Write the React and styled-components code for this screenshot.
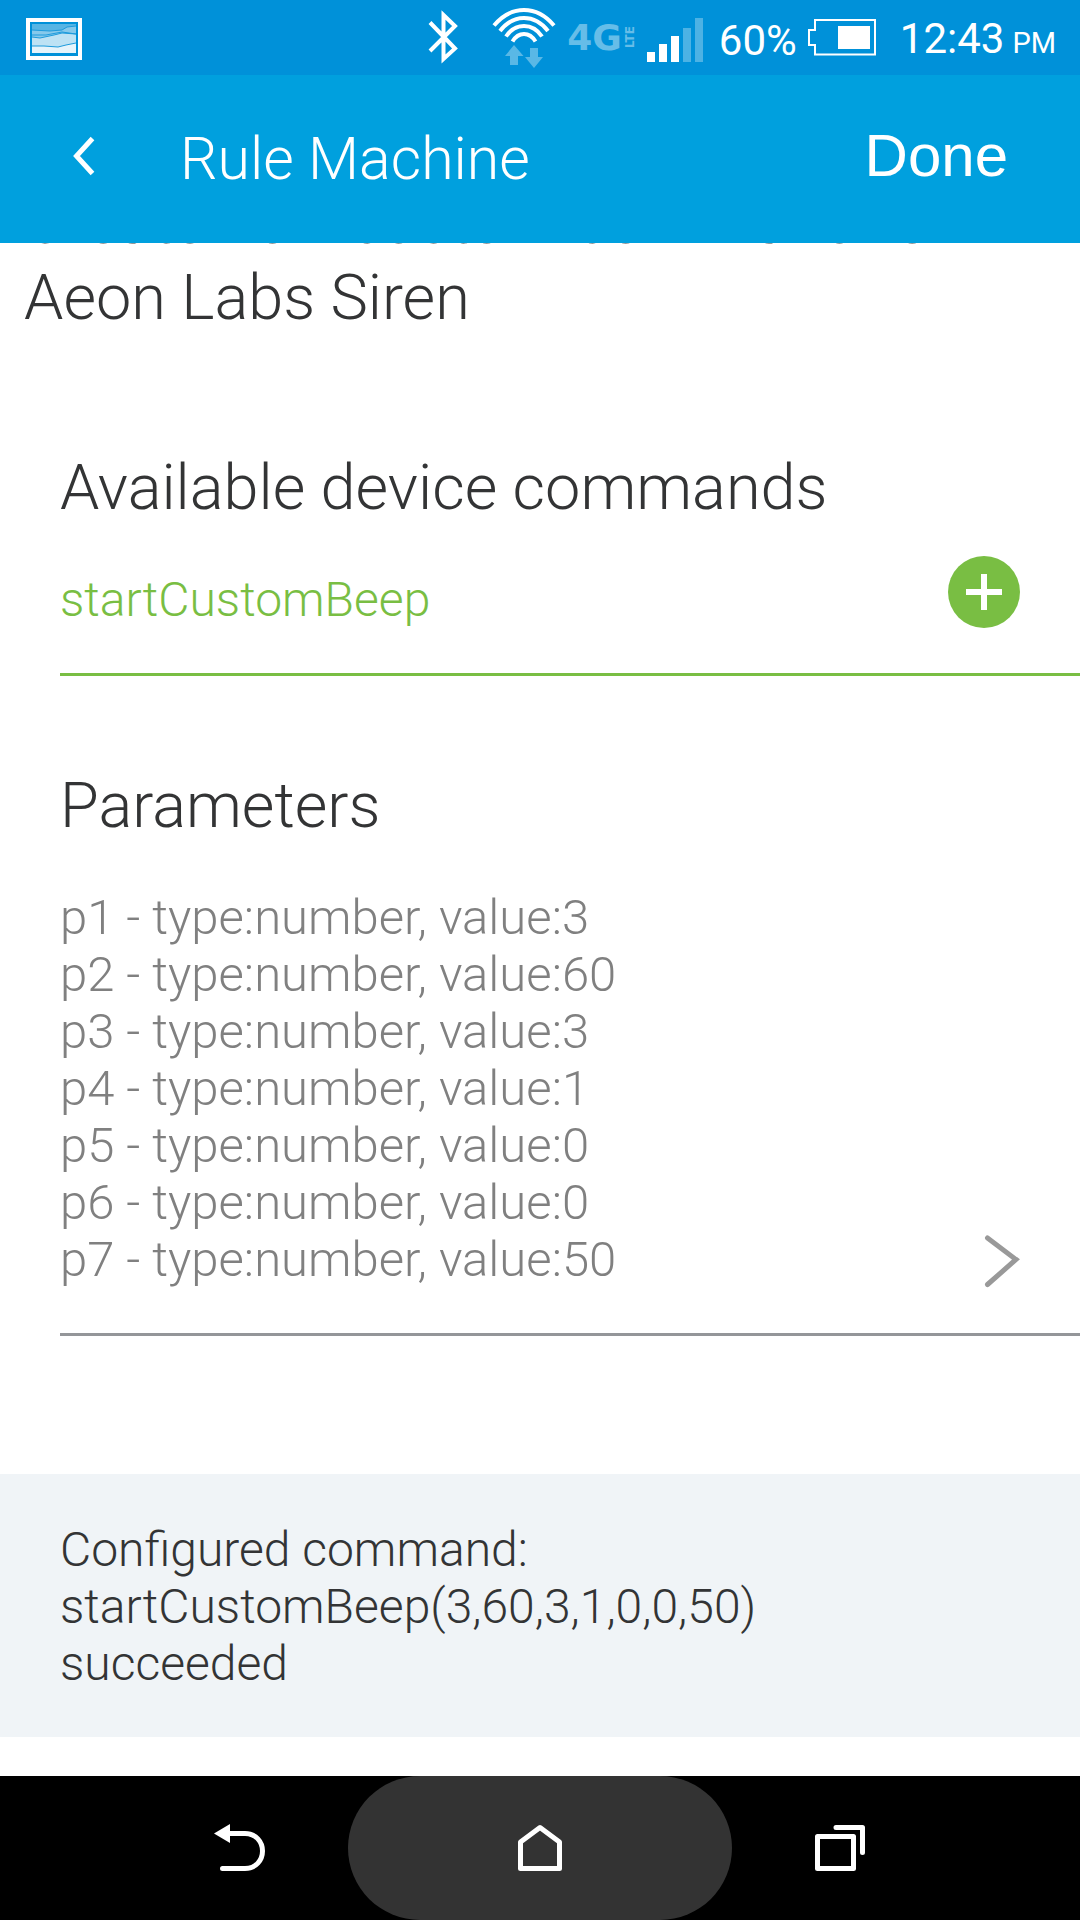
import React from "react";
import styled, { createGlobalStyle } from "styled-components";

const light = `Roboto, "Liberation Sans", sans-serif`;

const GlobalStyle = createGlobalStyle`
  *, *::before, *::after { box-sizing: border-box; }
  body { margin: 0; background: #fff; font-family: ${light}; font-weight: 300; }
  button { border: 0; padding: 0; margin: 0; background: none; color: inherit; font: inherit; cursor: pointer; }
  h1, h2, p, ul { margin: 0; padding: 0; font-weight: inherit; }
  svg { display: block; flex: none; }
`;

const Page = styled.div`
  min-height: 100vh;
  display: flex;
  flex-direction: column;
`;

const StatusBar = styled.div`
  height: 75px;
  flex: none;
  display: flex;
  align-items: center;
  justify-content: space-between;
  padding: 0 24px 0 26px;
  background: #0091d9;
  color: #fff;
  font-weight: 400;
  overflow: hidden;
`;

const StatusGroup = styled.div`
  display: flex;
  align-items: center;
  gap: ${(p) => p.$gap}px;
`;

const StatusText = styled.span`
  display: flex;
  align-items: baseline;
  gap: 8px;
  padding-top: 6px;
  font-size: 42px;
  line-height: 48px;
  white-space: nowrap;
`;

const Meridiem = styled.small`
  font-size: 29px;
`;

const Network = styled.span`
  display: flex;
  align-items: center;
  gap: 2px;
  color: #66bde8;
  font: 700 36px/75px "DejaVu Sans", sans-serif;
`;

const NetworkTag = styled.span`
  writing-mode: vertical-rl;
  transform: rotate(180deg);
  font-size: 12px;
  line-height: 12px;
`;

const AppBar = styled.header`
  height: 168px;
  flex: none;
  display: flex;
  align-items: center;
  padding: 0 72px 0 48px;
  background: #00a0de;
  color: #fff;
`;

const Title = styled.h1`
  flex: 1;
  padding-left: 60px;
  font-size: 59px;
  line-height: 76px;
`;

const BarButton = styled.button`
  min-width: 72px;
  padding-bottom: 6px;
  display: flex;
  justify-content: center;
  font-family: "Liberation Sans", Arial, sans-serif;
  font-size: 60px;
  line-height: 76px;
  font-weight: 400;
`;

const Content = styled.main`
  overflow: hidden;
  color: #333435;
`;

const Heading = styled.h2`
  font-size: 63px;
  line-height: 76px;
`;

/* First line is scrolled under the app bar. */
const PageHeading = styled(Heading)`
  margin-top: -59px;
  padding: 0 24px;
`;

const Section = styled.section`
  padding-left: 60px;
  margin-top: ${(p) => p.$top}px;
`;

const Row = styled.div`
  display: flex;
  align-items: flex-end;
  justify-content: space-between;
  margin-top: ${(p) => p.$top}px;
  padding: 0 60px 45px 0;
  border-bottom: 3px solid ${(p) => p.$line};
  color: ${(p) => p.$color};
  font-size: ${(p) => p.$size}px;
  line-height: 57px;
`;

const ParamList = styled.ul`
  list-style: none;
`;

const Result = styled.p`
  margin: 138px 0 39px;
  padding: 47px 60px 45px;
  background: #f0f4f7;
  font-size: 48px;
  line-height: 57px;
`;

const NavBar = styled.nav`
  flex: none;
  margin-top: auto;
  height: 144px;
  display: grid;
  grid-template-columns: 1fr 384px 1fr;
  padding: 0 132px;
  background: #000;
`;

const NavButton = styled.button`
  display: flex;
  align-items: center;
  justify-content: center;
  border-radius: 72px;
  background: ${(p) => (p.$pressed ? "#333" : "transparent")};
`;

const PictureIcon = () => (
  <svg width="56" height="75" viewBox="26 0 56 75" fill="none">
    <rect x="28" y="20" width="52" height="38" stroke="#fff" strokeWidth="4" />
    <path d="M32 24h44v30H32z" fill="#57b5e4" />
    <path d="M32 30l18 1 12-1 5-3 9-1v28H32z" fill="#86c9eb" />
    <path d="M32 37l8 1 14-3 8-2 14 1v20H32z" fill="#bde2f4" />
    <path d="M32 46l12 0 14 1 8-2 10-2v11H32z" fill="#e6f4fb" />
    <path d="M32 30l18 1 12-1 5-3 9-1M32 35l14 0 16-3 14 2M32 37l8 1 14-3 8-2 14 1M32 46l12 0 14 1 8-2 10-2" stroke="#1d9bdc" />
    <rect x="31" y="23" width="46" height="31" stroke="#0091d9" strokeWidth="2" />
  </svg>
);

const BluetoothIcon = () => (
  <svg width="30" height="75" viewBox="426 0 30 75" fill="none" stroke="#fff" strokeWidth="4">
    <path d="M428 22.500L453 48.500L441.500 59V15L453 26L428 51" />
  </svg>
);

const WifiIcon = () => (
  <svg width="64" height="75" viewBox="490 0 64 75" fill="none">
    <g stroke="#fff" strokeWidth="4">
      <path d="M492 25.500Q505 10 522 10T552 25.500" />
      <path d="M498 31Q508 18 522 18T546 31" />
      <path d="M504 36.500Q511 26 522 26T540 36.500" />
      <path d="M510.500 41.500Q515 34 522 34T533.500 41.500" />
    </g>
    <path d="M512 45l9.500 11H516v9h-8v-9h-5z" fill="#59b8e6" />
    <path d="M532 68l-9-11h5v-9h8v9h5z" fill="#59b8e6" />
  </svg>
);

const SignalIcon = () => (
  <svg width="56" height="75" viewBox="646 0 56 75">
    <path d="M646 52h8v10h-8zM658 44h8v18h-8zM670 36h8v26h-8z" fill="#fff" />
    <path d="M682 28h8v34h-8zM694 18h8v44h-8z" fill="#4db2e4" />
  </svg>
);

const BatteryIcon = () => (
  <svg width="68" height="75" viewBox="807 0 68 75">
    <path d="M814 20h60v34.500h-60V45h-6V30h6z" fill="none" stroke="#fff" strokeWidth="2" />
    <rect x="837" y="26" width="32" height="23" fill="#fff" />
  </svg>
);

const BackChevron = () => (
  <svg width="22" height="76" viewBox="73 118 22 76" fill="none" stroke="#fff" strokeWidth="5">
    <path d="M92.500 138.500L76.500 156L92.500 173.500" />
  </svg>
);

const PlusIcon = () => (
  <svg width="72" height="72" viewBox="0 0 72 72">
    <circle cx="36" cy="36" r="36" fill="#79be43" />
    <path d="M36 18v36M18 36h36" stroke="#fff" strokeWidth="6" />
  </svg>
);

const NextChevron = () => (
  <svg width="36" height="53" viewBox="984 1235 36 53" fill="none" stroke="#999" strokeWidth="5" strokeLinecap="round">
    <path d="M987.500 1238L1016 1259.500L987.500 1284.500" />
  </svg>
);

const NavBackIcon = () => (
  <svg width="52" height="48" viewBox="215 1824 52 48" fill="none">
    <path d="M215 1833.500l16-9.500v19z" fill="#fff" />
    <path d="M228 1833.500H246C257 1833.500 263.500 1842 263.500 1851S257 1868.500 246 1868.500H223.500" stroke="#fff" strokeWidth="5" strokeLinecap="round" />
  </svg>
);

const HomeIcon = () => (
  <svg width="44" height="48" viewBox="518 1824 44 48" fill="none" stroke="#fff" strokeWidth="5" strokeLinejoin="round">
    <path d="M520.500 1842L540 1827.500L559.500 1842V1868.500H520.500Z" />
  </svg>
);

const RecentsIcon = () => (
  <svg width="50" height="48" viewBox="815 1824 50 48" fill="none" stroke="#fff" strokeWidth="5" strokeLinejoin="round" strokeLinecap="round">
    <path d="M817.500 1836.500H853.500V1868.500H817.500Z" />
    <path d="M836 1827.500H862.500V1852.500" />
  </svg>
);

const params = [3, 60, 3, 1, 0, 0, 50];

export default function App() {
  return (
    <Page>
      <GlobalStyle />
      <StatusBar>
        <PictureIcon />
        <StatusGroup $gap={16}>
          <StatusGroup $gap={34}>
            <BluetoothIcon />
            <StatusGroup $gap={11}>
              <WifiIcon />
              <Network>
                4G<NetworkTag>LTE</NetworkTag>
              </Network>
              <SignalIcon />
            </StatusGroup>
          </StatusGroup>
          <StatusGroup $gap={24}>
            <StatusGroup $gap={11}>
              <StatusText>60%</StatusText>
              <BatteryIcon />
            </StatusGroup>
            <StatusText>
              12:43<Meridiem>PM</Meridiem>
            </StatusText>
          </StatusGroup>
        </StatusGroup>
      </StatusBar>

      <AppBar>
        <BarButton type="button" aria-label="Back">
          <BackChevron />
        </BarButton>
        <Title>Rule Machine</Title>
        <BarButton type="button">Done</BarButton>
      </AppBar>

      <Content>
        <PageHeading>
          Create new custom command for
          <br />
          Aeon Labs Siren
        </PageHeading>

        <Section $top={114}>
          <Heading>Available device commands</Heading>
          <Row $top={30} $line="#79be43" $color="#79be43" $size={48}>
            <span>startCustomBeep</span>
            <button type="button" aria-label="Add startCustomBeep">
              <PlusIcon />
            </button>
          </Row>
        </Section>

        <Section $top={92}>
          <Heading>Parameters</Heading>
          <Row $top={45} $line="#949699" $color="#808080" $size={49}>
            <ParamList>
              {params.map((value, i) => (
                <li key={i}>{`p${i + 1} - type:number, value:${value}`}</li>
              ))}
            </ParamList>
            <button type="button" aria-label="Edit parameters">
              <NextChevron />
            </button>
          </Row>
        </Section>

        <Result>
          Configured command:
          <br />
          startCustomBeep(3,60,3,1,0,0,50)
          <br />
          succeeded
        </Result>
      </Content>

      <NavBar>
        <NavButton type="button" aria-label="Back">
          <NavBackIcon />
        </NavButton>
        <NavButton type="button" aria-label="Home" $pressed>
          <HomeIcon />
        </NavButton>
        <NavButton type="button" aria-label="Recent apps">
          <RecentsIcon />
        </NavButton>
      </NavBar>
    </Page>
  );
}
